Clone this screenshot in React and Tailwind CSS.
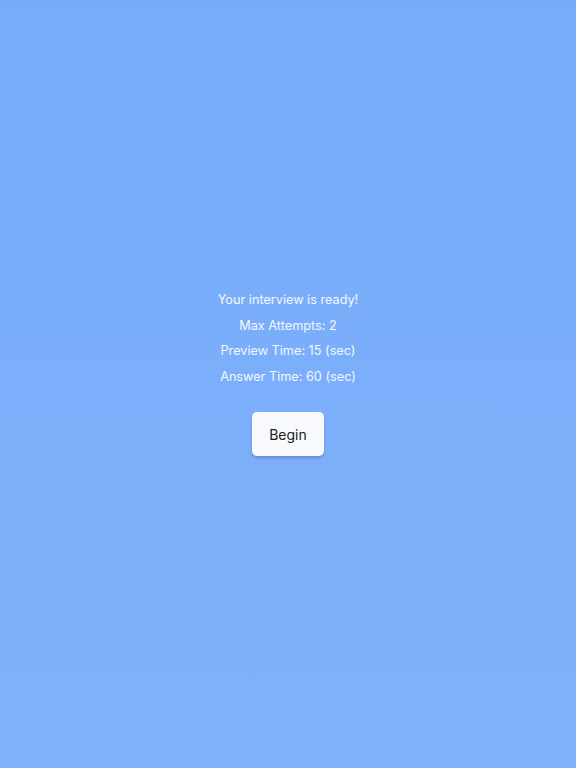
export default function App() {
  return (
    <div
      className="h-screen w-full flex flex-col items-center justify-center bg-gradient-to-b from-[#78acf8] to-[#7fb0fc] pb-[21px]"
      style={{ fontFamily: '"Inter", "Liberation Sans", sans-serif' }}
    >
      <div className="flex flex-col items-center gap-[7px] text-[12.7px] leading-[18.5px] text-white/90">
        <p>Your interview is ready!</p>
        <p>Max Attempts: 2</p>
        <p>Preview Time: 15 (sec)</p>
        <p>Answer Time: 60 (sec)</p>
      </div>
      <button className="mt-[26px] w-[72px] h-[44px] rounded-[5px] bg-[#f8f9fd] text-[14px] text-[#1a1a1a] shadow-[0_2px_3px_rgba(0,0,0,0.18)]">
        Begin
      </button>
    </div>
  );
}
